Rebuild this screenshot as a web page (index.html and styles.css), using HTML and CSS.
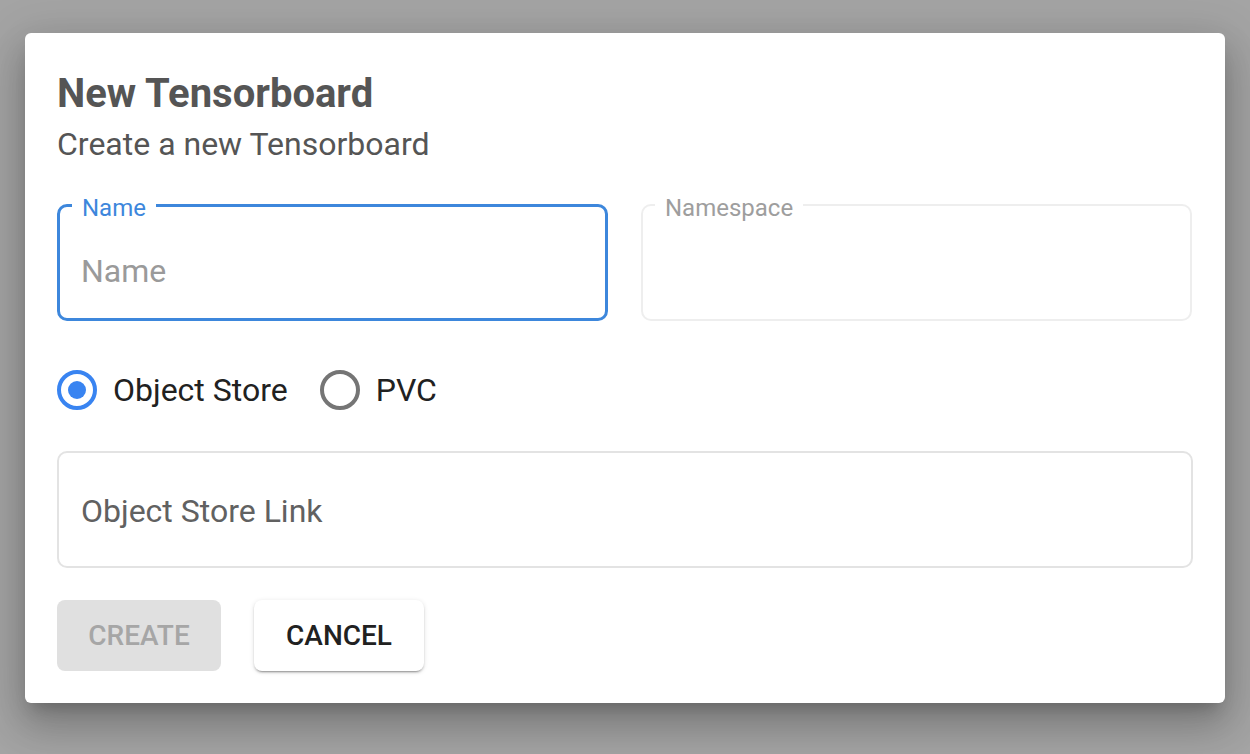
FILE: index.html
```html
<!DOCTYPE html>
<html>
<head>
<meta charset="utf-8">
<link rel="stylesheet" href="styles.css">
</head>
<body>
<div class="backdrop">
  <div class="dialog">
    <h1 class="title">New Tensorboard</h1>
    <p class="subtitle">Create a new Tensorboard</p>
    <div class="row">
      <div class="field focused">
        <span class="label">Name</span>
        <span class="placeholder">Name</span>
      </div>
      <div class="field disabled">
        <span class="label">Namespace</span>
      </div>
    </div>
    <div class="radios">
      <div class="radio checked"><span class="circle"><span class="dot"></span></span><span class="rlabel">Object Store</span></div>
      <div class="radio"><span class="circle"></span><span class="rlabel">PVC</span></div>
    </div>
    <div class="field wide">
      <span class="placeholder dark">Object Store Link</span>
    </div>
    <div class="actions">
      <button class="btn create">CREATE</button>
      <button class="btn cancel">CANCEL</button>
    </div>
  </div>
</div>
</body>
</html>
```

FILE: styles.css
```css
* { box-sizing: border-box; }
html, body { margin: 0; padding: 0; }
body {
  width: 1250px;
  height: 754px;
  overflow: hidden;
  font-family: Roboto, "Liberation Sans", sans-serif;
  background: #a4a4a4;
}
.backdrop {
  padding: 33px 25px 0 25px;
}
.dialog {
  width: 1200px;
  height: 670px;
  background: #fff;
  border-radius: 6px;
  padding: 37px 32px 0 32px;
  box-shadow: 0 11px 15px -7px rgba(0,0,0,.2), 0 24px 38px 3px rgba(0,0,0,.16), 0 9px 46px 8px rgba(0,0,0,.12);
}
.title {
  margin: 0;
  font-size: 40px;
  font-weight: 700;
  color: #555;
  line-height: 48px;
}
.subtitle {
  margin: 6px 0 0 0;
  font-size: 32px;
  color: #555;
  line-height: 40px;
}
.row {
  display: flex;
  gap: 33px;
  margin-top: 40px;
}
.field {
  position: relative;
  height: 117px;
  border-radius: 10px;
  display: flex;
  align-items: center;
}
.row .field { width: 551px; }
.field.focused { border: 3px solid #3d87dc; padding-top: 17px; }
.field.disabled { border: 2px solid #eeeeee; }
.field .label {
  position: absolute;
  padding: 0 10px;
  background: #fff;
  font-size: 24px;
  line-height: 24px;
}
.field.focused .label { color: #3d87dc; top: -11px; left: 12px; }
.field.disabled .label { color: #9e9e9e; top: -10px; left: 12px; }
.placeholder {
  font-size: 32px;
  line-height: 40px;
  color: #9a9a9a;
  padding-left: 21px;
}
.placeholder.dark { color: #616161; padding-left: 22px; }
.radios {
  display: flex;
  align-items: center;
  height: 40px;
  margin-top: 49px;
  gap: 32px;
}
.radio {
  display: flex;
  align-items: center;
}
.circle {
  width: 40px;
  height: 40px;
  border-radius: 50%;
  border: 4px solid #757575;
  display: flex;
  align-items: center;
  justify-content: center;
}
.radio.checked .circle { border-color: #3984f1; }
.dot {
  width: 18px;
  height: 18px;
  border-radius: 50%;
  background: #3984f1;
}
.rlabel {
  font-size: 32px;
  line-height: 40px;
  color: #212121;
  margin-left: 16px;
}
.field.wide {
  width: 1136px;
  border: 2px solid #e3e3e3;
  margin-top: 41px;
  padding-top: 2px;
}
.actions {
  display: flex;
  gap: 33px;
  margin-top: 32px;
}
.btn {
  height: 71px;
  border: none;
  border-radius: 8px;
  font-family: Roboto, "Liberation Sans", sans-serif;
  font-size: 28px;
  font-weight: 500;
  padding: 0;
}
.create {
  width: 164px;
  background: #e0e0e0;
  color: #a6a6a6;
}
.cancel {
  width: 170px;
  background: #fff;
  color: #212121;
  box-shadow: 0 3px 1px -2px rgba(0,0,0,.2), 0 2px 2px 0 rgba(0,0,0,.14), 0 1px 5px 0 rgba(0,0,0,.12);
}
```
